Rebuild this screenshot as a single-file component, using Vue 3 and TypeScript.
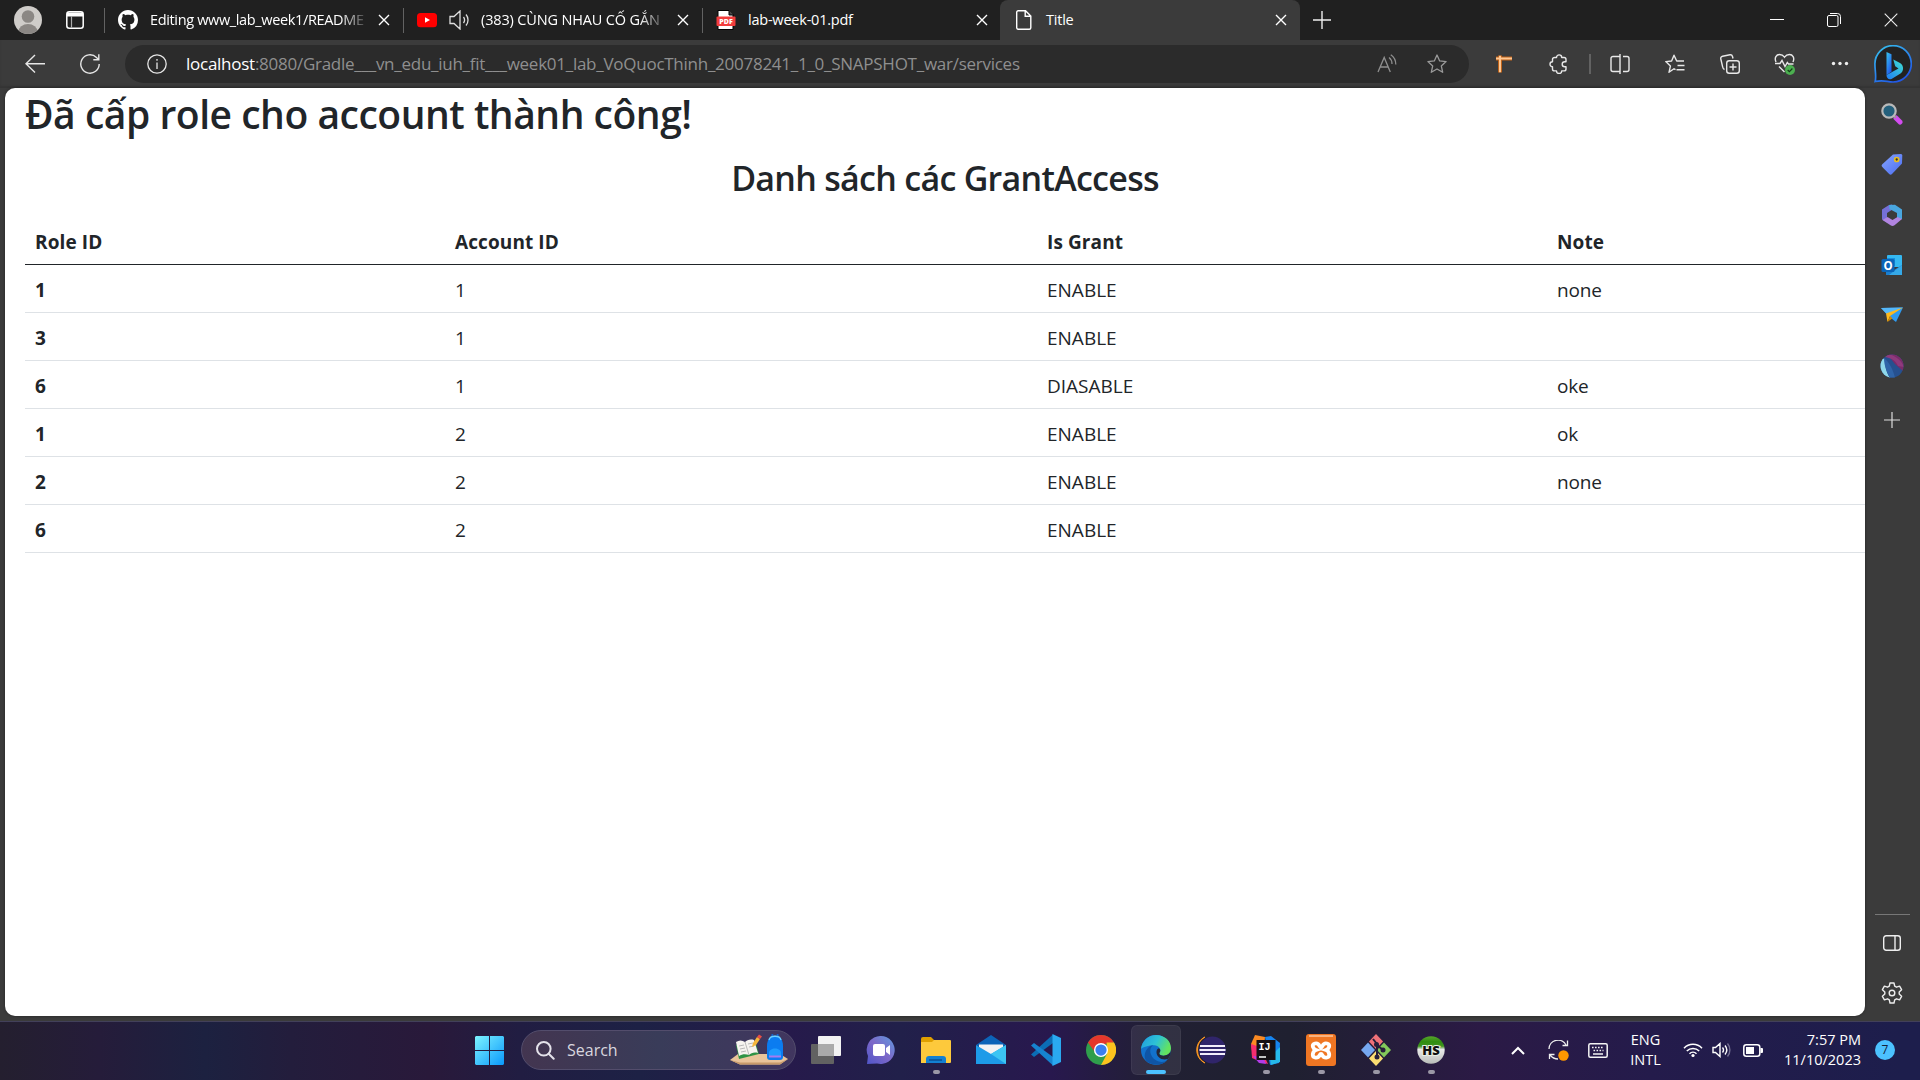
<script setup lang="ts">
interface GrantAccess {
  role: number
  account: number
  grant: string
  note: string
}

const rows: GrantAccess[] = [
  { role: 1, account: 1, grant: 'ENABLE', note: 'none' },
  { role: 3, account: 1, grant: 'ENABLE', note: '' },
  { role: 6, account: 1, grant: 'DIASABLE', note: 'oke' },
  { role: 1, account: 2, grant: 'ENABLE', note: 'ok' },
  { role: 2, account: 2, grant: 'ENABLE', note: 'none' },
  { role: 6, account: 2, grant: 'ENABLE', note: '' },
]
</script>

<template>
  <div class="screen">
    <header class="tabs">
      <div class="profile">
        <svg width="28" height="28" viewBox="0 0 28 28">
          <defs><clipPath id="av"><circle cx="14" cy="14" r="14" /></clipPath></defs>
          <circle cx="14" cy="14" r="14" fill="#cfccc9" />
          <g clip-path="url(#av)" fill="#8b8784"><circle cx="14" cy="10.5" r="6.3" /><ellipse cx="14" cy="25.500" rx="9.500" ry="7.500" /></g>
        </svg>
        <svg class="ws" width="18" height="18" viewBox="0 0 18 18">
          <rect x=".8" y=".8" width="16.400" height="16.400" rx="2.500" fill="none" stroke="#fff" stroke-width="1.500" />
          <path d="M1 1.500h16v4H1z" fill="#fff" /><path d="M5.500 5v12" stroke="#aaa" stroke-width="1.200" />
        </svg>
      </div>

      <div class="tab">
        <svg class="fav" width="20" height="20" viewBox="0 0 16 16"><path fill="#fff" d="M8 0C3.580 0 0 3.580 0 8c0 3.540 2.290 6.530 5.470 7.590.4.070.55-.17.55-.38 0-.19-.01-.82-.01-1.490-2.010.37-2.530-.49-2.690-.94-.09-.23-.48-.94-.82-1.130-.28-.15-.68-.52-.01-.53.630-.01 1.080.580 1.230.820.720 1.210 1.870.870 2.330.660.070-.52.280-.87.510-1.070-1.780-.2-3.640-.89-3.640-3.950 0-.87.310-1.590.820-2.150-.08-.2-.36-1.020.080-2.120 0 0 .670-.21 2.200.820.640-.18 1.320-.27 2-.27s1.360.090 2 .27c1.530-1.040 2.200-.82 2.200-.82.440 1.100.160 1.920.080 2.120.510.560.820 1.270.820 2.150 0 3.070-1.870 3.750-3.650 3.950.290.250.540.730.540 1.480 0 1.070-.01 1.930-.01 2.200 0 .210.150.460.550.380A8.010 8.010 0 0 0 16 8c0-4.420-3.580-8-8-8z" /></svg>
        <span class="tt fade">Editing www_lab_week1/README</span>
        <svg class="x" width="12" height="12" viewBox="0 0 12 12"><path d="M1 1l10 10M11 1L1 11" /></svg>
      </div>
      <div class="tab">
        <svg class="fav" width="20" height="20" viewBox="0 0 20 20"><rect y="3" width="20" height="14.200" rx="3.500" fill="#f00" /><path d="M8 7.200v5.600l5-2.800z" fill="#fff" /></svg>
        <svg class="snd" width="21" height="20" viewBox="0 0 21 20" fill="none" stroke="#ddd" stroke-width="1.300"><path d="M1 6.500v7h4l6 5.500V1L5 6.500zM14.500 7c1.300 1.800 1.300 4.200 0 6M17 4.500c2.700 3.200 2.700 7.800 0 11" /></svg>
        <span class="tt fade tight">(383) CÙNG NHAU CỐ GẮN</span>
        <svg class="x" width="12" height="12" viewBox="0 0 12 12"><path d="M1 1l10 10M11 1L1 11" /></svg>
      </div>
      <div class="tab">
        <svg class="fav" width="20" height="20" viewBox="0 0 20 20"><path d="M2 .5h11l4 4V19.500H2z" fill="#fff" stroke="#000" /><path d="M13 .5v4.500h4.500" fill="#444" stroke="#000" /><rect x=".5" y="6.500" width="19" height="9.500" rx="1" fill="#f23c3c" /><text x="10" y="13.800" text-anchor="middle" font-size="7" font-weight="800" fill="#fff" font-family="Open Sans, sans-serif">PDF</text></svg>
        <span class="tt">lab-week-01.pdf</span>
        <svg class="x" width="12" height="12" viewBox="0 0 12 12"><path d="M1 1l10 10M11 1L1 11" /></svg>
      </div>
      <div class="tab active">
        <svg class="fav" width="20" height="20" viewBox="0 0 20 20" fill="none" stroke="#fff" stroke-width="1.400"><path d="M4.200.7h7.300l5.300 5.300v11.800a1.500 1.500 0 0 1-1.500 1.500H4.200a1.500 1.500 0 0 1-1.500-1.500V2.200A1.500 1.500 0 0 1 4.200.7zM11.200 1v5.300h5.500" /></svg>
        <span class="tt">Title</span>
        <svg class="x" width="12" height="12" viewBox="0 0 12 12"><path d="M1 1l10 10M11 1L1 11" /></svg>
      </div>
      <svg class="plus" width="18" height="18" viewBox="0 0 18 18"><path d="M9 0v18M0 9h18" stroke="#eee" stroke-width="1.400" /></svg>
      <div class="win">
        <svg width="14" height="14" viewBox="0 0 14 14"><path d="M0 6.500h14" stroke="#fff" /></svg>
        <svg width="14" height="14" viewBox="0 0 14 14" fill="none" stroke="#fff"><rect x=".5" y="2.500" width="10.500" height="11" rx="1.500" /><path d="M3 .5h7.500a3 3 0 0 1 3 3V11" /></svg>
        <svg width="14" height="14" viewBox="0 0 14 14"><path d="M.7.7l12.600 12.600M13.300.7L.7 13.300" stroke="#eee" stroke-width="1.100" /></svg>
      </div>
    </header>

    <div class="toolbar">
      <svg class="back" width="20" height="20" viewBox="0 0 20 20" fill="none" stroke="#e6e6e6" stroke-width="1.400"><path d="M20 9.700H1M10 1L1 9.700l9 8.800" /></svg>
      <svg class="reload" width="20" height="20" viewBox="0 0 20 20" fill="none" stroke="#e6e6e6" stroke-width="1.400"><path d="M19.200 10A9.200 9.200 0 1 1 16.500 3.500L18.500 5.500M18.800.3v5.400h-5.500" /></svg>
      <div class="address">
        <svg width="20" height="20" viewBox="0 0 20 20" fill="none" stroke="#e6e6e6" stroke-width="1.300"><circle cx="10" cy="10" r="9.200" /><path d="M10 8.500V15M10 5v1.700" /></svg>
        <span class="url"><b>localhost</b>:8080/Gradle___vn_edu_iuh_fit___week01_lab_VoQuocThinh_20078241_1_0_SNAPSHOT_war/services</span>
        <svg class="aloud" width="20" height="20" viewBox="0 0 20 20" fill="none" stroke="#8f8f8f" stroke-width="1.300"><path d="M1 18L7.200 3.500 13.300 18M3.200 13h8M12 3.500c2 1.500 3 3.500 3 6.500M13.800.7c3.300 2.200 5 5.500 5 9.800" /></svg>
        <svg width="20" height="20" viewBox="0 0 20 20" fill="none" stroke="#9a9a9a" stroke-width="1.300" stroke-linejoin="round"><path d="M10 1l2.700 5.900 6.400.7-4.800 4.300 1.400 6.400L10 15l-5.700 3.300 1.400-6.400L.9 7.600l6.400-.7z" /></svg>
      </div>
      <div class="acts">
        <i><svg width="18" height="18" viewBox="0 0 18 18"><path d="M1 3.500h16M5 .5v17" stroke="#bd631b" stroke-width="4" /><path d="M1 3.500h16M5 .7v16.500" stroke="#ffc690" stroke-width="2" /></svg></i>
        <i><svg width="20" height="20" viewBox="0 0 20 20" fill="none" stroke="#e8e8e8" stroke-width="1.400" stroke-linejoin="round"><path d="M5.500 3.500h2a2.600 2.600 0 0 1 5.200 0h2.300a2 2 0 0 1 2 2v2.200h-1.300a2.500 2.500 0 0 0 0 5H17v2.200a2 2 0 0 1-2 2h-2.300a2.600 2.600 0 0 1-5.200 0h-2a2 2 0 0 1-2-2v-2.200a2.500 2.500 0 0 1 0-5V5.500a2 2 0 0 1 2-2z" /></svg></i>
        <em></em>
        <i><svg width="20" height="20" viewBox="0 0 20 20" fill="none" stroke="#e8e8e8" stroke-width="1.400"><path d="M7 2.500H3A2 2 0 0 0 1 4.500v11a2 2 0 0 0 2 2h4M13 2.500h4a2 2 0 0 1 2 2v11a2 2 0 0 1-2 2h-4M7 2.500h3M7 17.500h3M10 0v20" /></svg></i>
        <i><svg width="20" height="20" viewBox="0 0 20 20" fill="none" stroke="#e8e8e8" stroke-width="1.400" stroke-linejoin="round"><path d="M10.500 15.700L9 14.800l-5 3.500 1.400-6.200L.8 7.600l5.800-.6L9 1.200 11.700 7H19M12.500 11.500h7M11.500 15.700h8" /></svg></i>
        <i><svg width="20" height="20" viewBox="0 0 20 20" fill="none" stroke="#e8e8e8" stroke-width="1.400"><rect x="6.700" y="6.700" width="12.600" height="12.600" rx="2.500" /><path d="M13 9.500v7M9.500 13h7M4.500 15.500A3 3 0 0 1 2.700 13L.8 5a2.300 2.300 0 0 1 1.800-2.800L10 .8A2.300 2.300 0 0 1 12.500 2.500l.5 2" /></svg></i>
        <i><svg width="22" height="22" viewBox="0 0 22 22" fill="none" stroke="#e8e8e8" stroke-width="1.400"><path d="M2 9C0 4.500 2.500 1.500 5.500 1.500c2.500 0 4 1.300 5 2.700 1-1.400 2.500-2.700 5-2.700 3 0 5.500 3 3.500 7.500M1 10.500h5l2-3 3 6 2.300-4 1.200 1.500h5M5 13.500l5.500 5.500" /><circle cx="16" cy="17" r="5" fill="#4caf50" stroke="none" /><path d="M13.700 17l1.700 1.700 3-3.200" stroke="#163d18" stroke-width="1.200" /></svg></i>
        <i><svg width="18" height="6" viewBox="0 0 18 6" fill="#eee"><circle cx="2.500" cy="2.500" r="1.700" /><circle cx="9" cy="2.500" r="1.700" /><circle cx="15.500" cy="2.500" r="1.700" /></svg></i>
      </div>
      <svg class="bing" width="38" height="38" viewBox="0 0 38 38">
        <defs>
          <linearGradient id="bg1" x1="0" y1="0" x2=".6" y2="1"><stop offset="0" stop-color="#38c5ee" /><stop offset="1" stop-color="#2158e8" /></linearGradient>
          <linearGradient id="bg2" x1="1" y1="0" x2="0" y2="1"><stop offset="0" stop-color="#3fe0d0" /><stop offset="1" stop-color="#1f7cf5" /></linearGradient>
        </defs>
        <path d="M1.200 36.500C2.500 31 .9 26 .9 19A18.200 18.200 0 1 1 19 37c-6 0-9-2.500-17.800-.5z" fill="#222" stroke="url(#bg1)" stroke-width="1.700" />
        <path d="M12.500 7l5 2.200v17.600l-5 3.200z" fill="url(#bg1)" /><path d="M19.300 14.500l6.700 3.500c4 2.500 4 8 .5 10.500L17.500 34c-3 1-5-1-5-4l12-6.500-3.300-2.300z" fill="url(#bg2)" />
      </svg>
    </div>

    <div class="body">
      <main class="page">
        <h1>Đã cấp role cho account thành công!</h1>
        <h2>Danh sách các GrantAccess</h2>
        <table>
          <thead>
            <tr><th class="c1">Role ID</th><th class="c2">Account ID</th><th class="c3">Is Grant</th><th>Note</th></tr>
          </thead>
          <tbody>
            <tr v-for="(r, i) in rows" :key="i">
              <th>{{ r.role }}</th><td>{{ r.account }}</td><td class="state">{{ r.grant }}</td><td>{{ r.note }}</td>
            </tr>
          </tbody>
        </table>
      </main>

      <aside class="side">
        <i><svg width="22" height="22" viewBox="0 0 22 22"><path d="M15 15l4 4" stroke="#d34cf0" stroke-width="5" stroke-linecap="round" /><path d="M12 12l3 3" stroke="#999" stroke-width="2" /><circle cx="8" cy="8" r="6.700" fill="#24607c" stroke="#b9b9b9" stroke-width="2.200" /></svg></i>
        <i><svg width="22" height="22" viewBox="0 0 22 22"><defs><linearGradient id="tg" x1="0" y1="0" x2="1" y2="1"><stop offset="0" stop-color="#86a5ff" /><stop offset="1" stop-color="#4a6cf0" /></linearGradient></defs><path d="M12 1.500L20 1a1.500 1.500 0 0 1 1.300 1.500l-.3 8L11 21a2 2 0 0 1-2.800 0L1.300 14a2 2 0 0 1 0-2.800z" fill="url(#tg)" /><circle cx="15.700" cy="6.500" r="2" fill="#333" stroke="#e8bd20" stroke-width="1.700" /></svg></i>
        <i><svg width="22" height="22" viewBox="0 0 22 22"><path d="M8 1L1 5.500v10l5 3V9l7-4.500L11 .5z" fill="#7570d8" /><path d="M8 1l6-.3L21 5.500V15l-5 1.500V9L8.500 5z" fill="#49a6df" /><path d="M1.500 16l5-3 5 3 5-3 4.500 2-7.500 6.300a4 4 0 0 1-4 0z" fill="#b184e0" /></svg></i>
        <i><svg width="22" height="22" viewBox="0 0 22 22"><rect x="6" y="1" width="15" height="12" rx="1" fill="#35b8f1" /><path d="M6 4h8v8H6z" fill="#1490df" /><path d="M5 12l8 4 8-5v10H5z" fill="#1a7fd0" /><path d="M21 11v10H8z" fill="#35a9e8" /><rect x=".5" y="5" width="13" height="13" rx="1.500" fill="#0a64b8" /><text x="7" y="15.500" text-anchor="middle" font-size="11.500" font-weight="700" fill="#fff" font-family="Open Sans, sans-serif">O</text></svg></i>
        <i><svg width="22" height="22" viewBox="0 0 22 22"><path d="M0 4l22-.5L15 18l-4.500-3.500z" fill="#2f9bf0" /><path d="M0 4l22-.5L6 10.500z" fill="#55b8fa" /><path d="M5 9.500l17-6L9 12 6.500 18z" fill="#ffb91c" /><path d="M6.500 18L9 12l2.500 2.200z" fill="#d48a00" /></svg></i>
        <i><svg width="24" height="24" viewBox="0 0 24 24"><defs><clipPath id="gl"><circle cx="12" cy="12" r="11.500" /></clipPath></defs><g clip-path="url(#gl)"><path d="M0 0h24v24H0z" fill="#26508f" /><path d="M7 0h17v18L15 10z" fill="#7a2b6a" /><path d="M7 0c7 1 14 5 17 13l-6-1c-2-5-6-8-13-9z" fill="#8e3a7c" /><path d="M0 4l5 1c0 7 1 13 5 19H0z" fill="#8fd8ea" /><path d="M4 4c5 4 9 11 11 20h-5C7 18 4 12 4 4z" fill="#2f64a8" /></g></svg></i>
        <i class="add"><svg width="16" height="16" viewBox="0 0 16 16"><path d="M8 0v16M0 8h16" stroke="#ddd" stroke-width="1.200" /></svg></i>
        <hr />
        <i class="low"><svg width="18" height="16" viewBox="0 0 18 16" fill="none" stroke="#eee" stroke-width="1.400"><rect x=".7" y=".7" width="16.600" height="14.600" rx="2.500" /><path d="M12 1v14" /></svg></i>
        <i class="low2"><svg width="22" height="22" viewBox="0 0 22 22" fill="none" stroke="#eee" stroke-width="1.400" stroke-linejoin="round"><path d="M9 1h4l.7 3.200 1.800 1 3.100-1 2 3.500L18.200 10v2l2.400 2.300-2 3.500-3.100-1-1.800 1L13 21H9l-.7-3.200-1.800-1-3.100 1-2-3.500L3.800 12v-2L1.400 7.700l2-3.500 3.100 1 1.800-1z" /><circle cx="11" cy="11" r="2.800" /></svg></i>
      </aside>
    </div>

    <footer class="taskbar">
      <svg class="start" width="29" height="29" viewBox="0 0 29 29"><defs><linearGradient id="wn" x1="0" y1="0" x2="1" y2="1"><stop offset="0" stop-color="#7df3ff" /><stop offset="1" stop-color="#0a98fb" /></linearGradient></defs><path d="M1 0h13v14H0V1zM15 0h13l1 1v13H15zM0 15h14v14H1l-1-1zM15 15h14v13l-1 1H15z" fill="url(#wn)" /></svg>
      <div class="search">
        <svg width="19" height="19" viewBox="0 0 19 19" fill="none" stroke="#e4e2ea" stroke-width="2"><circle cx="7.800" cy="7.800" r="6.800" /><path d="M12.700 12.700l5 5" stroke-linecap="round" /></svg>
        <span>Search</span>
        <svg class="pic" width="58" height="32" viewBox="0 0 58 32">
          <path d="M0 26l8-6h42l8 5-8 5.500H10z" fill="#e9c49a" /><path d="M0 26l10 2.500h40l8-3.500-8 5.500H10z" fill="#c79a6a" />
          <path d="M6 11l19-4 4 13-20 5z" fill="#2f9345" /><path d="M6 8c3-2 6-2 9 0 2-2 5-3 9-2l4 13c-4-1-7 0-9 2-3-1-7-1-10 1z" fill="#f6f3ef" /><path d="M15 8l4 13M9 12l5-1M10 15l5-1M11 18l5-1M18 10l5-1M19 13l5-1" stroke="#aaa" stroke-width=".8" />
          <path d="M22 13l1-4 4-6 3 2-4 6z" fill="#f5b63b" /><path d="M27 3l2-2.500 3 2-2 2.500z" fill="#e94f45" />
          <path d="M42 2a3 3 0 0 1 6 0" fill="none" stroke="#1665c9" stroke-width="1.500" /><path d="M37 12c0-14 16-14 16 0v11a3 3 0 0 1-3 3H40a3 3 0 0 1-3-3z" fill="#0b7cf0" /><path d="M39 6c1-5 11-5 12 0" fill="none" stroke="#6bd0ff" stroke-width="1.300" /><path d="M39 19c0-6 12-6 12 0v4H39z" fill="#1f9cff" /><path d="M39 22.500h12" stroke="#a67bf0" stroke-width="2" />
        </svg>
      </div>
      <div class="apps">
        <i><svg width="30" height="28" viewBox="0 0 30 28"><rect y="8" width="23" height="20" rx="1" fill="#626262" /><rect x="7" width="23" height="20" rx="1" fill="#f2f2f2" /><path d="M7 8h16v12H8a1 1 0 0 1-1-1z" fill="#aaa" /></svg></i>
        <i><svg width="30" height="28" viewBox="0 0 30 28"><defs><linearGradient id="ch" x1="1" y1="0" x2="0" y2="1"><stop offset="0" stop-color="#5f9be0" /><stop offset=".5" stop-color="#7d68c8" /><stop offset="1" stop-color="#4f55c9" /></linearGradient></defs><path d="M15 0a14 14 0 1 1-4 27.500L1 28l1-8A14 14 0 0 1 15 0z" fill="url(#ch)" /><rect x="7" y="8" width="12" height="12" rx="2" fill="#fff" /><path d="M20 12l4-3v10l-4-3z" fill="#fff" /></svg></i>
        <i class="run"><svg width="30" height="28" viewBox="0 0 30 28"><path d="M0 3a2 2 0 0 1 2-2h8l3 3v6H0z" fill="#e0a000" /><path d="M0 6h11l2-2h16a1 1 0 0 1 1 1v21a1 1 0 0 1-1 1H0z" fill="#fdc93c" /><path d="M5 27v-4a3 3 0 0 1 3-3h14a3 3 0 0 1 3 3v4z" fill="#1380d2" /><path d="M8 24h13" stroke="#0a4f93" stroke-width="1.500" /></svg></i>
        <i><svg width="30" height="30" viewBox="0 0 30 30"><path d="M0 10L15 0l15 10-15 8z" fill="#0c64b8" /><path d="M3 9.500h24V13l-12 9L3 13z" fill="#f3f3f3" /><path d="M0 10l15 9 15-9v19H0z" fill="#1d9be8" /><path d="M30 10v19L15 19z" fill="#3cc5f3" /></svg></i>
        <i><svg width="30" height="32" viewBox="0 0 30 32"><path d="M22 .5v8.500L3 23 0 20.500z" fill="#0b6db5" /><path d="M22 31.500V23L3 9 0 11.500z" fill="#1683cf" /><path d="M21.500 0L30 4v24l-8.500 4z" fill="#2aa9f0" /></svg></i>
        <i><svg width="30" height="32" viewBox="0 0 32 32"><circle cx="16" cy="16" r="16" fill="#2f9e4c" /><path d="M2.100 8A16 16 0 0 1 29.900 8L16 10 10 19z" fill="#e5372c" /><path d="M29.900 8A16 16 0 0 1 16 32l6.500-12L22 8z" fill="#fcc31e" /><circle cx="16" cy="16" r="7.500" fill="#fff" /><circle cx="16" cy="16" r="6" fill="#3a7ff0" /></svg></i>
        <i class="on"><svg width="30" height="32" viewBox="0 0 32 32"><defs><linearGradient id="e1" x1="0" y1="0" x2="1" y2=".4"><stop offset="0" stop-color="#2098dc" /><stop offset=".55" stop-color="#2dc2d6" /><stop offset="1" stop-color="#63e35f" /></linearGradient></defs><circle cx="16" cy="16" r="16" fill="#1272cc" /><path d="M31.500 14v7l-12-1z" fill="#2b2c3f" /><path d="M0 15C1 6 8 0 16 0c10 0 16 7 16 14 0 5-4 8-8 8-5 0-5-2-4-3.500 2-3-1-7.500-6-7.500C8 11 2 13 0 15z" fill="url(#e1)" /><path d="M13 11c-5 3-4 12 3 16 4 2.500 9 2 12 .2C22 33 12 33 6 28 1 22 6 12 13 11z" fill="#0f55a5" /><path d="M20 18.500c-1 2 0 3.500 4 3.500 3 0 6-1 7.500-3.500 0 3-1 5-3 7-6 2-12-2-12-7.500 0-2 1-3.500 2.500-4 2 1 2 3 1 4.500z" fill="#252838" /></svg></i>
        <i><svg width="30" height="30" viewBox="0 0 30 30"><path d="M9 2C-2 7-2 23 9 28A15 15 0 0 1 9 2z" fill="#f79421" stroke="#f79421" /><circle cx="16.500" cy="15" r="13.500" fill="#30256a" /><path d="M4 11h25M3.500 15h26M4 19h25" stroke="#f2eefa" stroke-width="2" /></svg></i>
        <i class="run"><svg width="30" height="30" viewBox="0 0 30 30"><path d="M4 0l10 2-1 10L2 23 0 9z" fill="#fb8a23" /><path d="M0 9l9 3 8 17-7-2-9-4z" fill="#f62d6e" /><path d="M14 2l6-1 9 7-1 20-9 2z" fill="#1684ef" /><path d="M19 22l10-10v15l-9 3z" fill="#26b9e9" /><path d="M2 21l10 1 3 7-7-1z" fill="#b23be8" /><rect x="5.500" y="5" width="19" height="20" fill="#151015" /><text x="7.500" y="15" font-size="10" font-weight="700" fill="#fff" font-family="Liberation Mono, monospace">IJ</text><path d="M8 22h7" stroke="#fff" stroke-width="1.500" /></svg></i>
        <i class="run"><svg width="30" height="32" viewBox="0 0 30 32"><rect y="0" width="30" height="32" rx="3" fill="#ef7623" /><path d="M3 2h24" stroke="#f9b27e" stroke-width="2" /><path d="M9 9.500c5-1 4 4 6 4 2 0 1-5 6-4 4 1 2 5.500-1 6.500 3 1 5 6.500 1 7.500-5 1-4-3.500-6-3.500-2 0-1 4.500-6 3.500-4-1-2-6.500 1-7.500-3-1-5-5.500-1-6.500z" fill="none" stroke="#fff" stroke-width="3.800" /></svg></i>
        <i class="run"><svg width="30" height="32" viewBox="0 0 30 32"><path d="M15 0l7 7.500-7 7.500-7-7.500z" fill="#f07178" /><path d="M7 8.500l7 7.500-7 7.500L0 16z" fill="#76a8f0" /><path d="M23 8.500l7 7.500-7 7.500-7-7.500z" fill="#83c95a" /><path d="M15 17l7 7.500-7 7.500-7-7.500z" fill="#fbdd72" /><path d="M12 5l4 5v13M16 11l6 5" stroke="#261f3a" stroke-width="2" fill="none" /><g fill="#261f3a"><circle cx="15.500" cy="10.500" r="2.500" /><circle cx="22" cy="16" r="2.500" /><circle cx="16" cy="23" r="2.500" /></g></svg></i>
        <i class="run"><svg width="30" height="30" viewBox="0 0 30 30"><defs><linearGradient id="hs" x1="0" y1="0" x2="0" y2="1"><stop offset="0" stop-color="#58a52c" /><stop offset=".2" stop-color="#2f8d10" /><stop offset=".36" stop-color="#3f9420" /><stop offset=".48" stop-color="#e9e9e9" /><stop offset="1" stop-color="#b8bcb8" /></linearGradient></defs><circle cx="15" cy="15" r="13.700" fill="url(#hs)" /><text x="15" y="19.500" text-anchor="middle" font-size="13" font-weight="800" fill="#111" stroke="#e8f0e4" stroke-width="2" paint-order="stroke" font-family="Open Sans, sans-serif">HS</text></svg></i>
      </div>
      <div class="tray">
        <i><svg width="14" height="9" viewBox="0 0 14 9" fill="none" stroke="#fff" stroke-width="2"><path d="M1 8l6-6 6 6" /></svg></i>
        <i><svg width="21" height="21" viewBox="0 0 21 21" fill="none" stroke="#eee" stroke-width="1.300"><path d="M1 9a9 9 0 0 1 17-4M19.500.5V5.500h-5M1.500 19v-4.500h5M2 15c2 2.500 4 4 8 4" /><circle cx="15.500" cy="15.500" r="5.200" fill="#ff9800" stroke="none" /></svg></i>
        <i><svg width="20" height="15" viewBox="0 0 20 15" fill="none" stroke="#f4f4f4" stroke-width="1.500"><rect x=".8" y=".8" width="18.400" height="13.400" rx="1.500" /><path d="M4 4.500h12M5.500 7.500h10" stroke-dasharray="1.600 1.400" /><path d="M5 11h10" /></svg></i>
        <div class="lang"><span>ENG</span><span>INTL</span></div>
        <svg class="wifi" width="20" height="16" viewBox="0 0 20 16" fill="none" stroke="#fff" stroke-width="1.500"><path d="M1 6.200a12.500 12.500 0 0 1 18 0M3.800 9a8.700 8.700 0 0 1 12.400 0M6.500 11.700a5 5 0 0 1 7 0" /><circle cx="10" cy="13.500" r="1.600" fill="#fff" stroke="none" /></svg>
        <svg class="vol" width="20" height="16" viewBox="0 0 20 16" fill="none" stroke="#fff" stroke-width="1.400"><path d="M1 5.500v5h2.500L8 14.500v-13L3.500 5.500zM10.500 5.500c1.200 1.500 1.200 3.500 0 5M13 3.500c2.200 2.700 2.200 6.300 0 9" /><path d="M15.500 1.500c3.200 3.700 3.200 9.300 0 13" stroke="#716c90" /></svg>
        <svg class="bat" width="20" height="13" viewBox="0 0 20 13"><rect x=".8" y=".8" width="16" height="11.400" rx="2.500" fill="none" stroke="#fff" stroke-width="1.500" /><path d="M3 3h8v7H3zM17.500 4H19q1 0 1 1v3q0 1-1 1h-1.500z" fill="#fff" /></svg>
        <div class="clock"><span>7:57 PM</span><span>11/10/2023</span></div>
        <b class="badge">7</b>
      </div>
    </footer>
  </div>
</template>

<style>
body { margin: 0; overflow: hidden; }
</style>

<style scoped>
.screen { width: 1920px; height: 1080px; display: flex; flex-direction: column; background: #3b3b3b; font-family: "Open Sans", "Noto Sans", sans-serif; overflow: hidden; }
svg { display: block; flex: none; }
i { font-style: normal; display: flex; align-items: center; justify-content: center; flex: none; }

.tabs { height: 40px; flex: none; display: flex; align-items: center; background: #202020; }
.profile { width: 104px; box-sizing: border-box; padding-left: 14px; display: flex; align-items: center; flex: none; }
.ws { margin-left: 24px; }
.tab { width: 299px; height: 25px; box-sizing: border-box; flex: none; display: flex; align-items: center; border-left: 1px solid #626262; padding: 0 13px 0 13px; color: #fff; }
.tab.active { height: 40px; width: 300px; margin-left: -1px; background: #3b3b3b; border-left: 0; border-radius: 8px 8px 0 0; padding: 0 13px 0 14px; }
.tt { flex: 1; margin: 0 8px 0 12px; font-size: 14.5px; line-height: 22px; letter-spacing: -.22px; white-space: nowrap; }
.fade { letter-spacing: -.35px; -webkit-mask-image: linear-gradient(90deg, #000 calc(100% - 30px), transparent); mask-image: linear-gradient(90deg, #000 calc(100% - 30px), transparent); }
.tight { letter-spacing: -.15px; margin-left: 11px; }
.snd { margin-left: 12px; }
.x { stroke: #fff; stroke-width: 1.4; }
.plus { margin-left: 13px; }
.win { margin-left: auto; display: flex; gap: 43px; padding-right: 22px; }

.toolbar { height: 48px; flex: none; display: flex; align-items: center; box-shadow: inset 0 -2px 2px rgba(0, 0, 0, .12); }
.back { margin-left: 25px; }
.reload { margin-left: 35px; }
.address { margin-left: 25px; width: 1344px; height: 38px; box-sizing: border-box; border-radius: 19px; background: #2b2b2b; display: flex; align-items: center; padding: 0 22px; }
.url { flex: 1; margin-left: 19px; padding-bottom: 2px; font-size: 17px; letter-spacing: -.26px; color: #8f8f8f; white-space: nowrap; }
.url b { font-weight: 400; color: #fff; }
.aloud { margin-right: 30px; }
.acts { display: flex; align-items: center; margin-left: 8px; }
.acts i { width: 54.900px; }
.acts em { width: 2px; height: 20px; background: #626262; margin: 0 2px; }
.bing { margin-left: 7px; flex: none; }

.body { height: 933px; flex: none; display: flex; }
.page { margin-left: 5px; width: 1860px; height: 928px; box-sizing: border-box; flex: none; background: #fff; border-radius: 10px; padding: 0 0 0 20px; color: #212529; box-shadow: 0 0 3px rgba(0, 0, 0, .4); }
h1 { margin: 0; padding-top: 2px; font-size: 39px; line-height: 47px; font-weight: 600; letter-spacing: -.47px; }
h2 { margin: 21px 0 19px; font-size: 34px; line-height: 40px; font-weight: 600; letter-spacing: -.72px; text-align: center; }
table { width: 100%; border-collapse: separate; border-spacing: 0; table-layout: fixed; font-size: 19px; }
th, td { height: 48px; box-sizing: border-box; padding: 2px 10px 0; line-height: 28px; text-align: left; vertical-align: middle; border-bottom: 1px solid #dee2e6; }
th { font-weight: 700; letter-spacing: .1px; }
td { letter-spacing: -.2px; }
.state { letter-spacing: 0; }
thead th { border-bottom-color: #212529; }
.c1 { width: 420px; }
.c2 { width: 592px; }
.c3 { width: 510px; }

.side { width: 54px; padding-top: 1px; display: flex; flex-direction: column; align-items: center; }
.side i { height: 50.300px; width: 54px; }
.side .add { height: 54px; margin-top: 2px; }
.side hr { width: 35px; height: 1px; border: 0; background: #777; margin: auto 0 14px; }
.side .low { height: 28px; }
.side .low2 { height: 22px; margin: 25px 0 17px; }

.taskbar { height: 59px; flex: none; box-sizing: border-box; border-top: 1px solid #42405a; padding-bottom: 2px; display: flex; align-items: center; background: linear-gradient(90deg, #241f2f 0, #251c3a 100px, #1c2140 205px, #231d3c 290px, #29193a 430px, #211d42 520px, #1d2145 640px, #261a4b 790px, #21204a 900px, #28184e 1050px, #212033 1160px, #1f2030 1290px, #2b1a45 1480px, #241b4b 1650px, #1d1e4c 1900px); }
.start { margin-left: 475px; }
.search { margin-left: 17px; width: 275px; height: 40px; box-sizing: border-box; flex: none; border-radius: 20px; border: 1px solid #534d6c; background: linear-gradient(90deg, #433550, #393c59 50%, #41365f); display: flex; align-items: center; padding: 0 7px 0 14px; font-size: 16px; color: #d8d6df; }
.search span { flex: 1; margin-left: 12px; }
.apps { display: flex; margin-left: 2.500px; }
.apps i { width: 55px; height: 50px; position: relative; }
.apps .run::after, .apps .on::after { content: ""; position: absolute; bottom: 1px; left: 24px; width: 7px; height: 4px; border-radius: 2px; background: #9b98a6; }
.apps .on::before { content: ""; position: absolute; inset: 0 2.500px; border-radius: 6px; background: rgba(255, 255, 255, .08); box-shadow: inset 0 0 0 1px rgba(255, 255, 255, .05); }
.apps .on::after { left: 17.500px; width: 20px; background: #4cc2ff; }
.apps svg { position: relative; }
.tray { display: flex; align-items: center; margin-left: 39.500px; color: #fff; font-size: 14.5px; }
.tray i { width: 40px; }
.lang, .clock { display: flex; flex-direction: column; line-height: 20px; }
.lang { width: 55px; align-items: center; }
.wifi { margin-left: 10px; }
.vol { margin-left: 9px; }
.bat { margin-left: 11px; }
.clock { width: 98px; align-items: flex-end; }
.badge { margin-left: 14px; width: 20px; height: 20px; border-radius: 50%; background: #4cc2ff; color: #14233a; font-size: 12px; font-weight: 400; line-height: 20px; text-align: center; }
</style>
